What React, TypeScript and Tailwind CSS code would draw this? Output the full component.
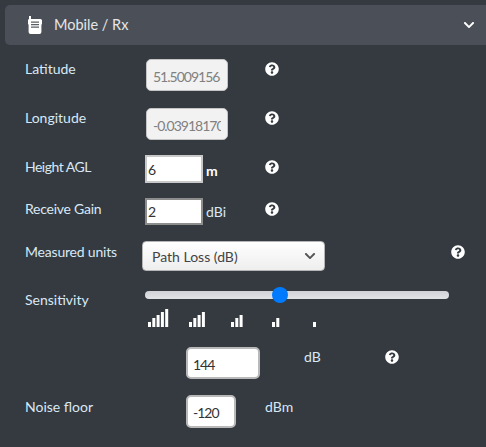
import { FaQuestionCircle, FaChevronDown } from "react-icons/fa";

const Help = ({ className = "" }: { className?: string }) => (
  <FaQuestionCircle className={"text-white text-[14px] shrink-0 " + className} />
);

const Bars = ({ heights }: { heights: number[] }) => (
  <svg width="21" height="19" viewBox="0 0 21 19" className="block shrink-0">
    {heights.map((h, i) => (
      <rect key={i} x={i * 4.3} y={19 - h} width="3" height={h} fill="#fff" />
    ))}
  </svg>
);

const Radio = () => (
  <svg width="14" height="18" viewBox="0 0 14 18" className="block shrink-0">
    <path d="M1 0h2v3h9.500a1.500 1.500 0 0 1 1.500 1.500V8l-.6 .8V16a2 2 0 0 1-2 2H2.600a2 2 0 0 1-2-2V8.800L0 8V4.500A1.500 1.500 0 0 1 1 3z" fill="#fff" />
    <path d="M3 5.500h8v1.300H3zM3 8h8v1.300H3zM3 10.500h8v1.300H3z" fill="#5a5f66" />
  </svg>
);

const roInput =
  "h-[32px] w-[82px] rounded-[5px] border border-[#c4c4c4] bg-[#f2f2f2] px-[6px] pt-[2px] text-[14px] tracking-[-1px] text-[#808080] outline-none";

export default function App() {
  return (
    <div
      className="h-[447px] w-[486px] overflow-hidden bg-[#343a40] pt-[5px] text-[14px] text-[#d9e8f5]"
      style={{ fontFamily: 'Lato, "Open Sans", sans-serif' }}
    >
      <div className="ml-[5px] flex h-[40px] items-center rounded-l-[5px] bg-[#4b5058] pl-[23px] pr-[11px] text-[#e6e6e6]">
        <Radio />
        <span className="ml-[12px] text-[14.5px]">Mobile / Rx</span>
        <FaChevronDown className="ml-auto text-[12px] text-white" />
      </div>

      <div className="pl-[25px]">
        <div className="mt-[14px] flex h-[32px]">
          <span className="w-[121px] leading-[20px]">Latitude</span>
          <input readOnly value="51.5009156" className={roInput} />
          <Help className="ml-[37px] mt-[3px]" />
        </div>
        <div className="mt-[17px] flex h-[32px]">
          <span className="w-[121px] leading-[20px]">Longitude</span>
          <input readOnly value="-0.03918170" className={roInput} />
          <Help className="ml-[37px] mt-[3px]" />
        </div>
        <div className="mt-[15px] flex h-[28px]">
          <span className="w-[120px] leading-[24px] tracking-[-0.5px]">Height AGL</span>
          <input readOnly value="6" className="h-[28px] w-[58px] border-2 border-[#c8c8c8] bg-white px-px text-[14px] text-[#333] outline-none" />
          <span className="ml-[3px] mt-[6px] w-[59px] font-bold leading-[20px] text-white">m</span>
          <Help className="mt-[5px]" />
        </div>
        <div className="mt-[15px] flex h-[27px]">
          <span className="w-[120px] leading-[22px] tracking-[-0.25px]">Receive Gain</span>
          <input readOnly value="2" className="h-[27px] w-[58px] border-2 border-[#8d8d8d] bg-white px-px text-[14px] text-[#333] outline-none" />
          <span className="ml-[3px] mt-[4px] w-[59px] leading-[20px]">dBi</span>
          <Help className="mt-[4px]" />
        </div>
        <div className="mt-[16px] flex h-[30px]">
          <span className="w-[117px] leading-[22px] tracking-[-0.2px]">Measured units</span>
          <div className="flex h-[30px] w-[183px] items-center justify-between rounded-[4px] border border-[#b5b5b5] bg-gradient-to-b from-white to-[#eeeeee] pl-[9px] pr-[8px] text-[#444]">
            <span>Path Loss (dB)</span>
            <FaChevronDown className="text-[12px] text-[#555]" />
          </div>
          <Help className="ml-[126px] mt-[4px]" />
        </div>
        <div className="mt-[20px] flex h-[42px]">
          <span className="-mt-px w-[120px] leading-[20px]">Sensitivity</span>
          <div className="w-[304px]">
            <div className="relative h-[8px] rounded-full bg-gradient-to-b from-[#d0d2d6] to-[#e2e3e5]">
              <div className="absolute left-[127px] top-[-4px] h-[16px] w-[16px] rounded-full bg-[#007bff]" />
            </div>
            <div className="ml-[3px] mt-[9px] flex gap-[20.25px]">
              <Bars heights={[5, 9, 12, 15, 18]} />
              <Bars heights={[5, 9, 12, 15]} />
              <Bars heights={[5, 9, 12]} />
              <Bars heights={[5, 9]} />
              <Bars heights={[5]} />
            </div>
          </div>
        </div>
        <div className="mt-[14px] flex h-[32px]">
          <input readOnly value="144" className="ml-[161px] h-[32px] w-[74px] rounded-[5px] border-2 border-[#b9b9b9] bg-white px-[5px] pt-[2px] text-[14px] tracking-[-1px] text-[#333] outline-none" />
          <span className="ml-[44px] leading-[20px]">dB</span>
          <Help className="ml-[64px] mt-[3px]" />
        </div>
        <div className="mt-[16px] flex h-[33px]">
          <span className="w-[161px] pt-[1px] leading-[22px]">Noise floor</span>
          <input readOnly value="-120" className="h-[33px] w-[50px] rounded-[5px] border-2 border-[#b9b9b9] bg-white px-[5px] pt-[2px] text-[14px] tracking-[-1px] text-[#333] outline-none" />
          <span className="ml-[29px] pt-[1px] leading-[22px]">dBm</span>
        </div>
      </div>
    </div>
  );
}
